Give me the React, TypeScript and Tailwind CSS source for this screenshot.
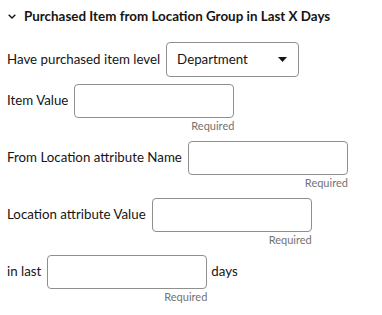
function Field({ label, suffix }: { label: string; suffix?: string }) {
  return (
    <div className="flex items-start">
      <div className="h-[34px] flex items-center mr-[6px] whitespace-nowrap">{label}</div>
      <div className="flex flex-col items-end">
        <div className="w-[160px] h-[34px] border border-[#8f8f8f] rounded-[4px] bg-white" />
        <div className="text-[11px] leading-[16px] text-[#737373]">Required</div>
      </div>
      {suffix && <div className="h-[34px] flex items-center ml-[4px]">{suffix}</div>}
    </div>
  )
}

export default function App() {
  return (
    <div
      className="w-[382px] h-[315px] bg-white text-[#161513] text-[13.3px] px-[7px] pt-[7px]"
      style={{ fontFamily: 'Lato, sans-serif' }}
    >
      <div className="flex items-center h-[18px]">
        <svg width="8" height="5" viewBox="0 0 8 5" className="ml-[1px] mr-[8px]">
          <path d="M0.7 0.7L4 4L7.3 0.7" fill="none" stroke="#161513" strokeWidth="1.4" />
        </svg>
        <span className="font-bold text-[13.4px]">Purchased Item from Location Group in Last X Days</span>
      </div>
      <div className="mt-[17px] flex flex-col gap-[7px]">
        <div className="flex items-center">
          <div className="mr-[6px]">Have purchased item level</div>
          <div className="w-[133px] h-[35px] border border-[#8f8f8f] rounded-[4px] flex items-center justify-between pl-[10px] pr-[11px]">
            <span>Department</span>
            <svg width="9" height="5" viewBox="0 0 9 5"><path d="M0 0h9L4.5 5z" fill="#161513" /></svg>
          </div>
        </div>
        <Field label="Item Value" />
        <Field label="From Location attribute Name" />
        <Field label="Location attribute Value" />
        <Field label="in last" suffix="days" />
      </div>
    </div>
  )
}
